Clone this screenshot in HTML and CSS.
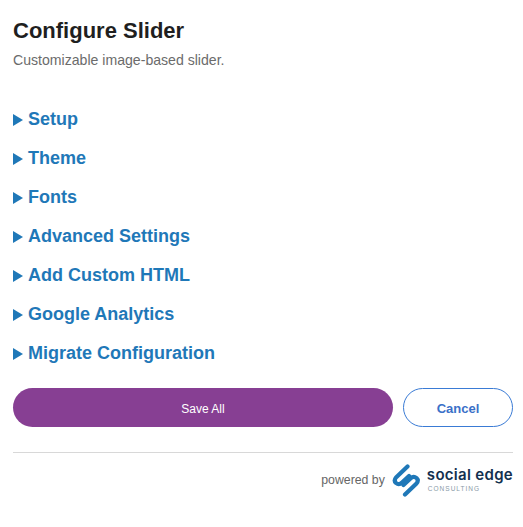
FILE: index.html
```html
<!DOCTYPE html>
<html lang="en">
<head>
    <meta charset="UTF-8">
    <title>Configure Slider</title>
    <link rel="stylesheet" href="styles.css">
</head>
<body>
    <div class="config-panel">
        <h1 class="config-title">Configure Slider</h1>
        <p class="config-desc">Customizable image-based slider.</p>

        <div class="section-list">
            <div class="section-row"><span class="arrow"></span>Setup</div>
            <div class="section-row"><span class="arrow"></span>Theme</div>
            <div class="section-row"><span class="arrow"></span>Fonts</div>
            <div class="section-row"><span class="arrow"></span>Advanced Settings</div>
            <div class="section-row"><span class="arrow"></span>Add Custom HTML</div>
            <div class="section-row"><span class="arrow"></span>Google Analytics</div>
            <div class="section-row"><span class="arrow"></span>Migrate Configuration</div>
        </div>

        <div class="actions">
            <button class="save-button">Save All</button>
            <button class="cancel-button">Cancel</button>
        </div>

        <div class="footer">
            <span class="powered">powered by</span>
            <svg class="logo-mark" width="30" height="34" viewBox="0 0 30 34" fill="none" stroke="#1f78b8" stroke-width="4.2" stroke-linecap="round" stroke-linejoin="round">
                <path d="M16.500 3.500 L5 14.500 Q2.500 17.500 5 20 Q8 22.500 11 19.500 L18 13"/>
                <path d="M14 31.500 L25.500 20.500 Q28 17.500 25.500 15 Q22.500 12.500 19.500 15.500 L12.500 22"/>
            </svg>
            <div class="logo-text">
                <span class="logo-name">social edge</span>
                <span class="logo-sub">CONSULTING</span>
            </div>
        </div>
    </div>
</body>
</html>
```

FILE: styles.css
```css
/* styles for the slider config panel */
body {
    margin: 0;
    background-color: #ffffff;
    font-family: "Liberation Sans", Arial, sans-serif;
}

.config-panel {
    padding: 19px 10px 0 13px;
}

.config-title {
    margin: 0;
    font-size: 22px;
    line-height: 24px;
    font-weight: bold;
    color: #1f1f1f;
}

.config-desc {
    margin: 10px 0 0;
    font-size: 14.100px;
    line-height: 14px;
    color: #6b6b6b;
}

/* --- Collapsed sections --- */
.section-list {
    margin-top: 33px;
}

.section-row {
    display: flex;
    align-items: center;
    height: 39px;
    font-size: 18px;
    font-weight: bold;
    color: #1f78b8;
}

.arrow {
    flex-shrink: 0;
    width: 0;
    height: 0;
    margin-right: 5px;
    border-left: 10px solid #1f78b8;
    border-top: 6px solid transparent;
    border-bottom: 6px solid transparent;
}

/* --- Buttons --- */
.actions {
    display: flex;
    gap: 10px;
    margin-top: 15px;
}

.save-button,
.cancel-button {
    height: 39px;
    padding-top: 3px;
    border-radius: 20px;
    font-family: inherit;
    font-size: 12px;
    cursor: pointer;
}

.save-button {
    flex-grow: 1;
    border: none;
    background-color: #873f93;
    color: #ffffff;
}

.cancel-button {
    width: 110px;
    border: 1px solid #3a7bd5;
    background-color: #ffffff;
    color: #3a70c8;
    font-size: 13px;
    font-weight: bold;
}

/* --- Footer --- */
.footer {
    display: flex;
    align-items: center;
    justify-content: flex-end;
    margin-top: 25px;
    padding-top: 10px;
    border-top: 1px solid #d8d8d8;
}

.powered {
    margin-right: 6px;
    font-size: 12.300px;
    color: #666666;
}

.logo-mark {
    margin-right: 6px;
}

.logo-text {
    display: flex;
    flex-direction: column;
}

.logo-name {
    font-family: "Inter", sans-serif;
    font-size: 15px;
    line-height: 18px;
    font-weight: 600;
    letter-spacing: 0.300px;
    color: #12304f;
}

.logo-sub {
    margin-left: 1px;
    font-size: 6.500px;
    line-height: 10px;
    letter-spacing: 1px;
    color: #8a9aa8;
}
```
